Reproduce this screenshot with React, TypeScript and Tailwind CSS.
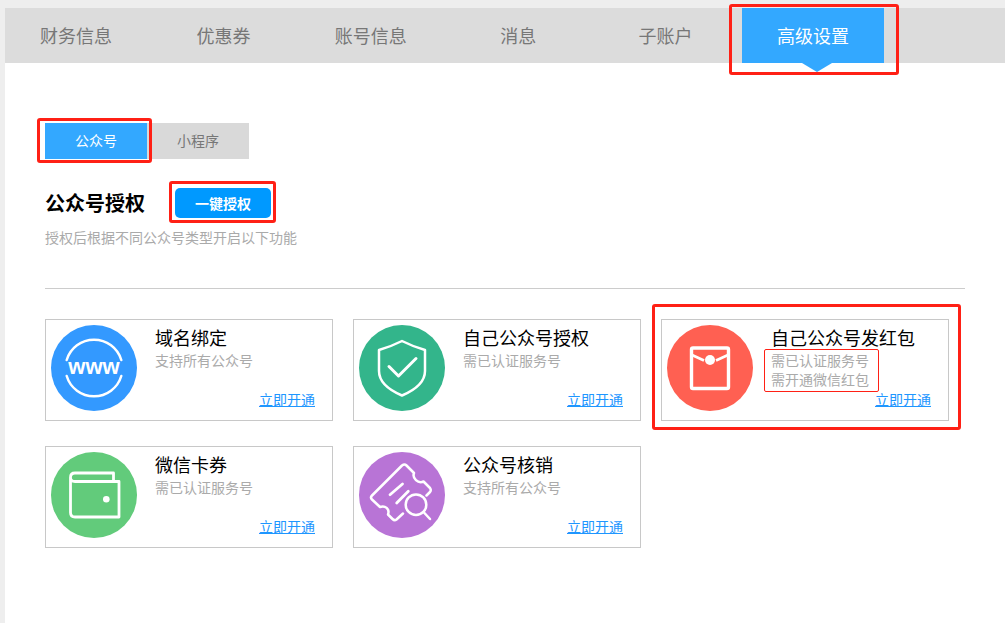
import React from "react";

const tabs = ["财务信息", "优惠券", "账号信息", "消息", "子账户", "高级设置"];

function Www() {
  return (
    <svg viewBox="0 0 86 86" className="w-[86px] h-[86px]">
      <path d="M15.700 35 A28.500 28.500 0 0 1 70.300 35" fill="none" stroke="#fff" strokeWidth="2.500" strokeLinecap="round" />
      <path d="M15.700 51 A28.500 28.500 0 0 0 70.300 51" fill="none" stroke="#fff" strokeWidth="2.500" strokeLinecap="round" />
      <text x="43" y="49" textAnchor="middle" fontSize="22" fontWeight="700" fill="#fff" fontFamily='"Liberation Sans", sans-serif'>www</text>
    </svg>
  );
}
function Shield() {
  return (
    <svg viewBox="0 0 86 86" className="w-[86px] h-[86px]">
      <path d="M43 16 Q55 22 66 25 V46 C66 57 56 65 43 70.500 C30 65 20 57 20 46 V25 Q31 22 43 16 Z" fill="none" stroke="#fff" strokeWidth="2.500" strokeLinejoin="round" />
      <path d="M30 41.500 L39.500 51 L57 33.500" fill="none" stroke="#fff" strokeWidth="3" strokeLinecap="round" strokeLinejoin="round" />
    </svg>
  );
}
function Packet() {
  return (
    <svg viewBox="0 0 86 86" className="w-[86px] h-[86px]">
      <rect x="24.500" y="23" width="37" height="40.500" rx="1.500" fill="none" stroke="#fff" strokeWidth="3.400" />
      <path d="M25 30 L37 35.500 M61 30 L49 35.500" fill="none" stroke="#fff" strokeWidth="2.800" />
      <circle cx="43" cy="35" r="5" fill="#fff" />
    </svg>
  );
}
function Wallet() {
  return (
    <svg viewBox="0 0 86 86" className="w-[86px] h-[86px]">
      <path d="M62.500 29 V21 H24 Q19.500 21 19.500 25.500 V60.500 Q19.500 65 24 65 H68 V29.500 H24 Q19.500 29.500 19.500 25.500" fill="none" stroke="#fff" strokeWidth="2.800" strokeLinejoin="round" />
      <circle cx="55.300" cy="47.300" r="3.300" fill="#fff" />
    </svg>
  );
}
function Ticket() {
  return (
    <svg viewBox="0 0 86 86" className="w-[86px] h-[86px]">
      <path d="M44 61.500 L37.500 67.500 Q35.500 69 33.500 67 L29 62.500 C31 57 26 53 21 55 L13 47.500 Q11 45.500 13 43.500 L43 13.500 Q45.500 11.500 47.500 13.500 L55 21 C53 26 59 32 64.500 29.500 L71 36 Q72.500 38 71 40 L67.500 43.500" fill="none" stroke="#fff" strokeWidth="2.500" strokeLinecap="round" strokeLinejoin="round" />
      <path d="M31 42.700 L43.500 32 M37.700 51 L49.300 39.300" fill="none" stroke="#fff" strokeWidth="2.800" strokeLinecap="round" />
      <circle cx="57" cy="52.700" r="10.300" fill="none" stroke="#fff" strokeWidth="2.500" />
      <path d="M64.500 60 L71 67" fill="none" stroke="#fff" strokeWidth="2.500" strokeLinecap="round" />
    </svg>
  );
}

function Card({ color, icon, title, lines }: { color: string; icon: React.ReactNode; title: string; lines: string[] }) {
  return (
    <div className="h-[102px] border border-[#c8c8c8] flex pl-[5px] pt-[5px] relative">
      <div className={`w-[86px] h-[86px] rounded-full shrink-0 ${color}`}>{icon}</div>
      <div className="ml-[18px] -mt-[1px] flex-1 flex flex-col pr-[17px]">
        <div className="text-[18px] leading-[26px] text-black">{title}</div>
        <div className="text-[14px] leading-[19px] text-[#aaaaaa] mt-[1px] h-[38px]">
          {lines.map((l) => (
            <div key={l}>{l}</div>
          ))}
        </div>
        <a className="text-[14px] leading-[20px] text-[#1e96ff] underline self-end">立即开通</a>
      </div>
    </div>
  );
}

export default function App() {
  return (
    <div
      className="w-[1005px] h-[623px] bg-[#eeeeee] pt-[8px] pl-[5px] overflow-hidden relative"
      style={{ fontFamily: '"Noto Sans CJK SC", "Liberation Sans", sans-serif' }}
    >
      <div className="bg-white h-full">
        <div className="h-[55px] bg-[#dcdcdc] flex">
          {tabs.map((t, i) => (
            <div
              key={t}
              className={
                i === 5
                  ? "w-[142px] mr-[5.400px] flex items-center justify-center text-[18px] text-white bg-[#33a8ff] relative"
                  : "w-[142px] mr-[5.400px] flex items-center justify-center text-[18px] text-[#777777]"
              }
            >
              {t}
              {i === 5 && (
                <span className="absolute top-full left-[60px] w-0 h-0 border-x-[15px] border-x-transparent border-t-[9px] border-t-[#33a8ff]" />
              )}
            </div>
          ))}
        </div>

        <div className="pl-[40px] pr-[40px] pt-[60px]">
          <div className="flex h-[36px]">
            <div className="w-[102px] bg-[#33a8ff] text-white text-[14px] flex items-center justify-center pb-[2px]">公众号</div>
            <div className="w-[102px] bg-[#d9d9d9] text-[#777777] text-[14px] flex items-center justify-center pb-[2px]">小程序</div>
          </div>
          <div className="flex items-center mt-[29px] h-[30px]">
            <div className="w-[130px] text-[20px] font-bold text-black">公众号授权</div>
            <div className="w-[96px] h-[30px] rounded-[5px] bg-[#0099ff] text-white text-[14px] font-bold flex items-center justify-center">一键授权</div>
          </div>
          <div className="text-[14px] leading-[20px] text-[#aaaaaa] mt-[9px]">授权后根据不同公众号类型开启以下功能</div>
          <div className="h-px bg-[#cccccc] mt-[41px]" />
          <div className="grid grid-cols-[288px_288px_288px] gap-x-[20px] gap-y-[25px] mt-[30px]">
            <Card color="bg-[#3399ff]" icon={<Www />} title="域名绑定" lines={["支持所有公众号"]} />
            <Card color="bg-[#33b58b]" icon={<Shield />} title="自己公众号授权" lines={["需已认证服务号"]} />
            <Card color="bg-[#ff6052]" icon={<Packet />} title="自己公众号发红包" lines={["需已认证服务号", "需开通微信红包"]} />
            <Card color="bg-[#62cb7b]" icon={<Wallet />} title="微信卡券" lines={["需已认证服务号"]} />
            <Card color="bg-[#b874d6]" icon={<Ticket />} title="公众号核销" lines={["支持所有公众号"]} />
          </div>
        </div>
      </div>

      {/* red annotation frames lying over the page */}
      <div className="absolute left-[729px] top-[4px] w-[170px] h-[71px] border-[3px] border-[#ff2015] rounded-[3px]" />
      <div className="absolute left-[37px] top-[118px] w-[115px] h-[45px] border-[3px] border-[#ff2015] rounded-[3px]" />
      <div className="absolute left-[169px] top-[181px] w-[107px] h-[42px] border-[3px] border-[#ff2015] rounded-[3px]" />
      <div className="absolute left-[652px] top-[304px] w-[309px] h-[126px] border-[3px] border-[#ff2015] rounded-[3px]" />
      <div className="absolute left-[764px] top-[349px] w-[115px] h-[43px] border border-[#ff2015] rounded-[2px]" />
    </div>
  );
}
